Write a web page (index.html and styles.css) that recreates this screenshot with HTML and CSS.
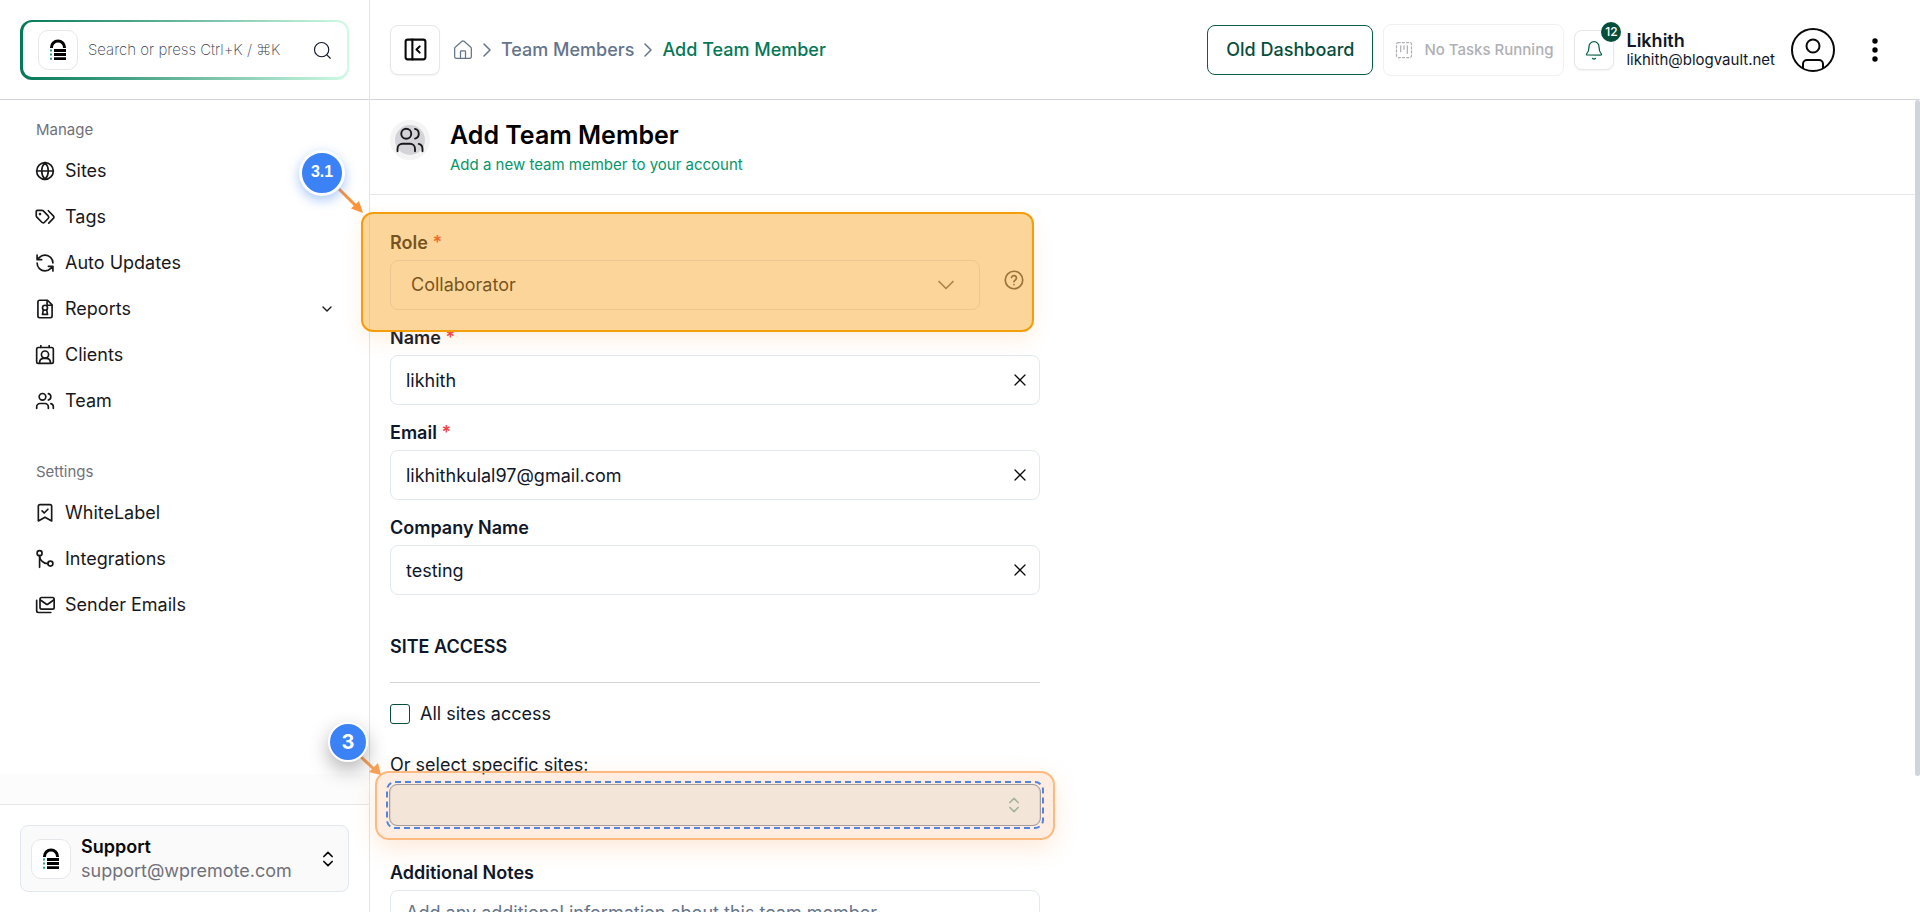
FILE: index.html
```html
<!DOCTYPE html>
<html lang="en">
<head>
  <meta charset="UTF-8">
  <title>Add Team Member</title>
  <link rel="stylesheet" href="styles.css">
</head>
<body>

  <!-- shared shapes -->
  <svg class="sprite" aria-hidden="true">
    <symbol id="logo" viewBox="0 0 24 24">
      <path d="M5.500 10V9.500a6.500 6.500 0 0 1 13 0V10" fill="none" stroke="#000" stroke-width="3"/>
      <path d="M8 12.500h12M8 16.500h12M8 20.700h12" stroke="#000" stroke-width="2.800"/>
      <path d="M4 12.500h2M4 16.500h2M4 20.700h2" stroke="#2a9d8f" stroke-width="2"/>
    </symbol>
    <symbol id="users" viewBox="0 0 24 24">
      <path d="M16 21v-2a4 4 0 0 0-4-4H6a4 4 0 0 0-4 4v2"/>
      <circle cx="9" cy="7" r="4"/>
      <path d="M22 21v-2a4 4 0 0 0-3-3.870M16 3.130a4 4 0 0 1 0 7.750"/>
    </symbol>
    <symbol id="chevron-right" viewBox="0 0 24 24"><path d="m9 18 6-6-6-6"/></symbol>
    <symbol id="chevron-down" viewBox="0 0 24 24"><path d="m6 9 6 6 6-6"/></symbol>
    <symbol id="up-down" viewBox="0 0 24 24"><path d="m7 15 5 5 5-5M7 9l5-5 5 5"/></symbol>
    <symbol id="close" viewBox="0 0 24 24"><path d="M18 6 6 18M6 6l12 12"/></symbol>
  </svg>

  <aside class="sidebar">
    <div class="sidebar-top">
      <div class="search">
        <span class="logo-tile"><svg class="logo"><use href="#logo"/></svg></span>
        <input type="text" class="search-input" aria-label="Search" placeholder="Search or press Ctrl+K / ⌘K">
        <svg class="icon search-icon" viewBox="0 0 24 24"><circle cx="11.500" cy="11.500" r="9.500"/><path d="m18.500 18.500 4.500 4.500"/></svg>
      </div>
    </div>

    <nav class="menu">
      <h2 class="menu-title">Manage</h2>
      <a href="#" class="menu-item">
        <svg class="icon" viewBox="0 0 24 24"><circle cx="12" cy="12" r="10"/><path d="M12 2a14.500 14.500 0 0 0 0 20 14.500 14.500 0 0 0 0-20M2 12h20"/></svg>
        Sites
      </a>
      <a href="#" class="menu-item">
        <svg class="icon" viewBox="0 0 24 24"><path d="M1.500 5.500v5a2.500 2.500 0 0 0 .7 1.700l6 6.100a2.200 2.200 0 0 0 3.200 0l4.400-4.500a2.200 2.200 0 0 0 0-3.100L10 4.700A2.500 2.500 0 0 0 8.300 4H3A1.500 1.500 0 0 0 1.500 5.500z"/><path d="m16 4.500 6 6.200a2.200 2.200 0 0 1 0 3l-5.500 5.600"/><circle cx="6" cy="8.500" r=".6"/></svg>
        Tags
      </a>
      <a href="#" class="menu-item">
        <svg class="icon" viewBox="0 0 24 24"><path d="M21.500 12A9.500 9.500 0 0 0 12 2.500a9.750 9.750 0 0 0-7 3L2.500 8M2.500 2.500V8H8M2.500 12a9.500 9.500 0 0 0 9.500 9.500 9.750 9.750 0 0 0 7-3l2.500-2.500M16 16h5.500v5.500"/></svg>
        Auto Updates
      </a>
      <a href="#" class="menu-item">
        <svg class="icon" viewBox="0 0 24 24"><path d="M15 1.500H5.500a2 2 0 0 0-2 2v17a2 2 0 0 0 2 2h13a2 2 0 0 0 2-2V7z"/><path d="M14.500 2v5.500h5.500"/><circle cx="12" cy="10.500" r="3"/><path d="m10 13-1 5.500h6l-1-5.500"/></svg>
        Reports
        <svg class="icon menu-arrow"><use href="#chevron-down"/></svg>
      </a>
      <a href="#" class="menu-item">
        <svg class="icon" viewBox="0 0 24 24"><rect x="2" y="3" width="20" height="19" rx="2"/><path d="M7 .8V3M17 .8V3M5.500 21.500v-1a5 5 0 0 1 5-4.500h3a5 5 0 0 1 5 4.500v1"/><circle cx="12" cy="11.500" r="4.300"/></svg>
        Clients
      </a>
      <a href="#" class="menu-item">
        <svg class="icon"><use href="#users"/></svg>
        Team
      </a>

      <h2 class="menu-title">Settings</h2>
      <a href="#" class="menu-item">
        <svg class="icon" viewBox="0 0 24 24"><path d="m20 21.500-8-4.500-8 4.500V4a2 2 0 0 1 2-2h12a2 2 0 0 1 2 2z"/><path d="m8.500 9.500 2.500 2.500 4.500-4.500"/></svg>
        WhiteLabel
      </a>
      <a href="#" class="menu-item">
        <svg class="icon" viewBox="0 0 24 24"><circle cx="5.500" cy="5" r="3"/><circle cx="18.500" cy="17.500" r="3"/><path d="M5.500 22V8a10 10 0 0 0 10 9.500"/></svg>
        Integrations
      </a>
      <a href="#" class="menu-item">
        <svg class="icon" viewBox="0 0 24 24"><rect x="6" y="3" width="17" height="14" rx="2"/><path d="m6.500 6 6.800 4.800a2 2 0 0 0 2.400 0L22.500 6M2 6.500V19a2 2 0 0 0 2 2h15"/></svg>
        Sender Emails
      </a>
    </nav>

    <div class="sidebar-shade"></div>
    <div class="sidebar-bottom">
      <button type="button" class="account">
        <span class="logo-tile"><svg class="logo"><use href="#logo"/></svg></span>
        <span class="account-text">
          <strong>Support</strong>
          <span class="account-mail">support@wpremote.com</span>
        </span>
        <svg class="icon"><use href="#up-down"/></svg>
      </button>
    </div>
  </aside>

  <div class="content">
    <header class="topbar">
      <button type="button" class="toggle" aria-label="Toggle sidebar">
        <svg class="icon" viewBox="0 0 24 24"><rect x="2.500" y="2.500" width="19" height="19" rx="2"/><path d="M9 2.500v19M16 9l-3 3 3 3"/></svg>
      </button>
      <nav class="breadcrumb">
        <a href="#" aria-label="Home"><svg class="icon home" viewBox="0 0 24 24"><path d="M15 22v-8a1 1 0 0 0-1-1h-4a1 1 0 0 0-1 1v8"/><path d="M2 10.200a2 2 0 0 1 .7-1.500l8-7.100a2 2 0 0 1 2.600 0l8 7.100a2 2 0 0 1 .7 1.500V20a2 2 0 0 1-2 2H4a2 2 0 0 1-2-2z"/></svg></a>
        <svg class="icon sep"><use href="#chevron-right"/></svg>
        <a href="#">Team Members</a>
        <svg class="icon sep"><use href="#chevron-right"/></svg>
        <a href="#" class="current">Add Team Member</a>
      </nav>

      <div class="actions">
        <button type="button" class="old-dashboard">Old Dashboard</button>
        <button type="button" class="tasks" disabled>
          <svg class="icon" viewBox="0 0 24 24"><rect x="3" y="3" width="18" height="18" rx="2" stroke-dasharray="2.500 2.500"/><path d="M8 7v7M12 7v4M16 7v9"/></svg>
          No Tasks Running
        </button>
        <button type="button" class="bell" aria-label="Notifications">
          <svg class="icon" viewBox="0 0 24 24"><path d="M10.300 22a2 2 0 0 0 3.400 0M3.300 16.300A1 1 0 0 0 4 18h16a1 1 0 0 0 .7-1.700C19.400 15 18 13.500 18 8A6 6 0 0 0 6 8c0 5.500-1.400 7-2.700 8.300"/></svg>
          <span class="badge">12</span>
        </button>
        <div class="user">
          <strong>Likhith</strong>
          <span>likhith@blogvault.net</span>
        </div>
        <svg class="avatar" viewBox="0 0 44 44"><circle cx="22" cy="22" r="21"/><circle cx="22" cy="18" r="6.500"/><path d="M12 40v-4a4 4 0 0 1 4-4h12a4 4 0 0 1 4 4v4"/></svg>
        <button type="button" class="more" aria-label="More">
          <svg viewBox="0 0 6 24"><circle cx="3" cy="3" r="2.700"/><circle cx="3" cy="12" r="2.700"/><circle cx="3" cy="21" r="2.700"/></svg>
        </button>
      </div>
    </header>

    <main class="page">
      <div class="page-head">
        <span class="page-icon"><svg class="icon"><use href="#users"/></svg></span>
        <div>
          <h1>Add Team Member</h1>
          <p>Add a new team member to your account</p>
        </div>
      </div>

      <form class="form">
        <div class="field">
          <label for="role">Role <span class="required">*</span></label>
          <div class="role-row">
            <div class="control">
              <select id="role"><option>Collaborator</option></select>
              <svg class="icon role-arrow"><use href="#chevron-down"/></svg>
            </div>
            <svg class="icon help" viewBox="0 0 24 24"><circle cx="12" cy="12" r="10.500"/><path d="M9 9a3 3 0 0 1 5.900 1c0 2-3 2.500-3 4.200M12 17.500v.2"/></svg>
          </div>
          <div class="mark mark-role"></div>
          <svg class="pointer pointer-role" viewBox="0 0 32 32"><path class="line" d="M4 4l18 18"/><path class="tip" d="M28 28 16 23.500 24 16z"/></svg>
          <span class="step step-role">3.1</span>
        </div>

        <div class="field">
          <label for="name">Name <span class="required">*</span></label>
          <div class="control">
            <input type="text" id="name" value="likhith">
            <button type="button" class="clear" aria-label="Clear name"><svg class="icon"><use href="#close"/></svg></button>
          </div>
        </div>

        <div class="field">
          <label for="email">Email <span class="required">*</span></label>
          <div class="control">
            <input type="email" id="email" value="likhithkulal97@gmail.com">
            <button type="button" class="clear" aria-label="Clear email"><svg class="icon"><use href="#close"/></svg></button>
          </div>
        </div>

        <div class="field">
          <label for="company">Company Name</label>
          <div class="control">
            <input type="text" id="company" value="testing">
            <button type="button" class="clear" aria-label="Clear company name"><svg class="icon"><use href="#close"/></svg></button>
          </div>
        </div>

        <h2 class="section-title">SITE ACCESS</h2>

        <div class="check">
          <input type="checkbox" id="all-sites">
          <label for="all-sites">All sites access</label>
        </div>

        <div class="sites">
          <label for="sites">Or select specific sites:</label>
          <div class="control">
            <select id="sites"><option></option></select>
            <svg class="icon sites-arrow"><use href="#up-down"/></svg>
            <div class="mark mark-sites"></div>
            <div class="outline-sites"><svg><rect width="100%" height="100%" rx="8"/></svg></div>
            <svg class="pointer pointer-sites" viewBox="0 0 32 32"><path class="line" d="M8 9l14 13"/><path class="tip" d="M28 27 16 24 25 15z"/></svg>
            <span class="step step-sites">3</span>
          </div>
        </div>

        <div class="field notes">
          <label for="notes">Additional Notes</label>
          <textarea id="notes" rows="3" placeholder="Add any additional information about this team member"></textarea>
        </div>
      </form>
    </main>
    <div class="scrollbar"></div>
  </div>

</body>
</html>
```
FILE: styles.css
```css
* {
  box-sizing: border-box;
}
body {
  font-family: Inter, sans-serif;
  font-size: 18px;
  line-height: 24px;
  color: #0f172a;
  margin: 0;
  display: flex;
  height: 100vh;
  overflow: hidden;
  background: #fff;
}
h1, h2, p {
  margin: 0;
}
a {
  color: inherit;
  text-decoration: none;
}
button, input, select, textarea {
  font: inherit;
  color: inherit;
  background: #fff;
}
button {
  padding: 0;
  cursor: pointer;
}
strong {
  font-weight: 600;
}
.sprite {
  position: absolute;
  width: 0;
  height: 0;
}
.icon {
  width: 20px;
  height: 20px;
  flex: none;
  fill: none;
  stroke: currentColor;
  stroke-width: 2;
  stroke-linecap: round;
  stroke-linejoin: round;
}

/* sidebar */
.sidebar {
  width: 370px;
  flex: none;
  display: flex;
  flex-direction: column;
  border-right: 1px solid #e2e4ea;
}
.sidebar-top {
  height: 100px;
  padding: 20px;
  border-bottom: 1px solid #d1d5db;
}
.search {
  height: 60px;
  display: flex;
  align-items: center;
  padding: 0 16px 0 15px;
  border: solid transparent;
  border-width: 2px 2px 3px 3px;
  border-radius: 12px;
  background: linear-gradient(#fff, #fff) padding-box, linear-gradient(90deg, #047857, #d1fae5) border-box;
}
.logo-tile {
  width: 40px;
  height: 40px;
  flex: none;
  display: flex;
  align-items: center;
  justify-content: center;
  border: 1px solid #e5e7eb;
  border-radius: 10px;
  background: #fff;
}
.logo {
  width: 24px;
  height: 24px;
}
.search-input {
  flex: 1;
  min-width: 0;
  margin-left: 10px;
  padding: 0;
  border: 0;
  outline: 0;
  font-size: 15px;
  font-weight: 200;
}
.search-input::placeholder {
  color: #374151;
  opacity: 1;
}
.search-icon {
  width: 18px;
  height: 18px;
  stroke-width: 1.5;
}
.menu {
  flex: 1;
  display: flex;
  flex-direction: column;
  padding: 11px 20px;
  color: #18181b;
}
.menu-title {
  height: 37px;
  padding: 0 16px;
  font-size: 15px;
  line-height: 38px;
  font-weight: 400;
  color: #71717a;
}
.menu-item + .menu-title {
  margin-top: 29px;
}
.menu-item {
  height: 46px;
  display: flex;
  align-items: center;
  gap: 10px;
  padding: 0 14px 0 15px;
}
.menu-arrow {
  width: 16px;
  height: 16px;
  margin-left: auto;
}
.sidebar-shade {
  height: 30px;
  background: #fcfcfc;
}
.sidebar-bottom {
  padding: 20px;
  border-top: 1px solid #e5e7eb;
}
.account {
  width: 100%;
  height: 67px;
  display: flex;
  align-items: center;
  gap: 10px;
  padding: 0 10px;
  border: 1px solid #e2e8f0;
  border-radius: 8px;
  background: #fafafa;
  color: #09090b;
  text-align: left;
}
.account-text {
  flex: 1;
  display: flex;
  flex-direction: column;
}
.account-mail {
  color: #71717a;
}

/* top bar */
.content {
  flex: 1;
  min-width: 0;
  display: flex;
  flex-direction: column;
  position: relative;
}
.topbar {
  height: 100px;
  flex: none;
  display: flex;
  align-items: center;
  padding: 0 36px 0 20px;
  border-bottom: 1px solid #d1d5db;
}
.toggle {
  width: 50px;
  height: 50px;
  display: flex;
  align-items: center;
  justify-content: center;
  border: 1px solid #e5e7eb;
  border-radius: 8px;
  box-shadow: 0 1px 2px rgba(0, 0, 0, .05);
  color: #09090b;
}
.toggle .icon {
  width: 25px;
  height: 25px;
}
.breadcrumb {
  display: flex;
  align-items: center;
  gap: 2px;
  margin-left: 13px;
  font-weight: 500;
  color: #64748b;
}
.breadcrumb .icon {
  display: block;
  stroke-width: 1.5;
}
.breadcrumb .sep {
  width: 24px;
  height: 24px;
}
.current {
  color: #047857;
}
.actions {
  display: flex;
  align-items: center;
  margin-left: auto;
}
.old-dashboard {
  height: 50px;
  padding: 0 18px;
  border: 1px solid #065f46;
  border-radius: 8px;
  font-weight: 500;
  color: #064e3b;
}
.tasks {
  height: 52px;
  display: flex;
  align-items: center;
  gap: 10px;
  margin: 0 10px;
  padding: 0 10px;
  border: 1px solid #f1f1f3;
  border-radius: 8px;
  font-size: 15px;
  font-weight: 500;
  color: #b0b0b5;
}
.tasks .icon {
  stroke-width: 1.5;
}
.bell {
  width: 40px;
  height: 40px;
  position: relative;
  display: flex;
  align-items: center;
  justify-content: center;
  border: 1px solid #e5e7eb;
  border-radius: 8px;
  box-shadow: 0 1px 2px rgba(0, 0, 0, .05);
  color: #065f46;
}
.bell .icon {
  stroke-width: 1.5;
}
.badge {
  position: absolute;
  top: -9px;
  right: -8px;
  width: 20px;
  height: 20px;
  border-radius: 50%;
  background: #064e3b;
  color: #fff;
  font-size: 12px;
  line-height: 20px;
  font-weight: 500;
  text-align: center;
}
.user {
  display: flex;
  flex-direction: column;
  margin: 0 16px 0 12px;
  font-size: 15px;
  line-height: 19px;
}
.user strong {
  font-size: 18px;
}
.avatar {
  width: 44px;
  height: 44px;
  fill: none;
  stroke: #09090b;
  stroke-width: 2;
}
.more {
  width: 18px;
  height: 40px;
  margin-left: 31px;
  border: 0;
}
.more svg {
  display: block;
  width: 6px;
  height: 24px;
  margin: auto;
}

/* page */
.page {
  flex: 1;
  min-height: 0;
}
.page-head {
  height: 95px;
  display: flex;
  gap: 20px;
  padding: 20px;
  border-bottom: 1px solid #e5e7eb;
}
.page-icon {
  width: 40px;
  height: 40px;
  display: flex;
  align-items: center;
  justify-content: center;
  border: 5px solid #f4f4f5;
  border-radius: 50%;
  background: #d4d4d8;
  color: #18181b;
}
.page-icon .icon {
  width: 30px;
  height: 30px;
  stroke-width: 1.5;
}
h1 {
  font-size: 25px;
  line-height: 30px;
  font-weight: 600;
  color: #000;
}
.page-head p {
  font-size: 15px;
  line-height: 30px;
  color: #059669;
}
.form {
  max-width: 690px;
  padding: 33px 20px;
}
.field {
  position: relative;
  margin-bottom: 13px;
}
.field label {
  display: block;
  height: 32px;
  line-height: 30px;
  font-weight: 600;
}
.required {
  color: #ef4444;
}
.control {
  position: relative;
  flex: 1;
}
.control input, .control select, textarea {
  display: block;
  width: 100%;
  height: 50px;
  padding: 0 48px 0 15px;
  border: 1px solid #e2e8f0;
  border-radius: 8px;
  appearance: none;
}
.control select {
  padding-left: 20px;
}
.clear {
  position: absolute;
  top: 15px;
  right: 10px;
  width: 20px;
  height: 20px;
  border: 0;
  color: #09090b;
}
.clear .icon {
  display: block;
  stroke-width: 1.5;
}
.role-row {
  display: flex;
  align-items: flex-start;
  gap: 24px;
}
.role-arrow {
  position: absolute;
  top: 11px;
  right: 20px;
  width: 28px;
  height: 28px;
  stroke-width: 1.5;
  color: #71717a;
}
.help {
  margin: 10px 16px 0 0;
  color: #52525b;
}
.section-title {
  height: 75px;
  margin: 11px 0 20px;
  padding-top: 13px;
  border-bottom: 1px solid #d1d5db;
  font-size: 18px;
  line-height: 52px;
  font-weight: 600;
}
.check {
  display: flex;
  align-items: center;
  gap: 10px;
  height: 22px;
}
.check input {
  width: 20px;
  height: 20px;
  margin: 0;
  appearance: none;
  border: 1px solid #064e3b;
  border-radius: 3px;
}
.sites {
  margin-top: 27px;
}
.sites label {
  display: block;
  height: 32px;
  line-height: 26px;
}
.sites .control select {
  height: 42px;
}
.sites-arrow {
  position: absolute;
  top: 11px;
  right: 16px;
  color: #065f46;
  opacity: .4;
}
.notes {
  margin-top: 32px;
}
.notes textarea {
  height: 100px;
  padding: 10px 15px;
}
textarea::placeholder {
  color: #64748b;
}

/* guide overlays */
.mark {
  position: absolute;
  z-index: 2;
  border: 2px solid #f59e0b;
  border-radius: 12px;
  pointer-events: none;
}
.mark-role {
  top: -16px;
  left: -29px;
  right: 6px;
  height: 120px;
  background: rgba(247, 159, 23, .44);
  box-shadow: 0 8px 20px rgba(251, 146, 60, .14);
}
.mark-sites {
  inset: -13px -15px -14px;
  border-color: #fdba80;
  border-radius: 14px;
  background: rgba(251, 146, 60, .16);
  box-shadow: 0 8px 24px rgba(251, 146, 60, .2);
}
.outline-sites {
  position: absolute;
  z-index: 3;
  inset: -2px -3px;
  pointer-events: none;
}
.outline-sites svg {
  display: block;
  width: 100%;
  height: 100%;
  overflow: visible;
  fill: none;
  stroke: #5584e0;
  stroke-width: 2;
  stroke-dasharray: 6 4;
}
.outline-sites::before {
  content: "";
  position: absolute;
  inset: 2px;
  border: 1px solid #a39c9c;
  border-radius: 8px;
  background: rgba(110, 150, 140, .08);
}
.step {
  position: absolute;
  z-index: 4;
  border: 3px solid #fff;
  border-radius: 50%;
  background: #3b82f6;
  color: #fff;
  font-weight: 700;
  text-align: center;
}
.step-role {
  top: -78px;
  left: -91px;
  width: 46px;
  height: 46px;
  font-family: "Liberation Sans", Arial, sans-serif;
  font-size: 16px;
  line-height: 38px;
  box-shadow: 0 4px 12px rgba(59, 130, 246, .45);
}
.step-sites {
  top: -62px;
  left: -62px;
  width: 40px;
  height: 40px;
  border-width: 2px;
  font-size: 20px;
  line-height: 36px;
  box-shadow: 0 8px 20px rgba(0, 0, 0, .3);
}
.pointer {
  position: absolute;
  z-index: 3;
  width: 32px;
  height: 32px;
}
.pointer .line {
  stroke: #fb923c;
  stroke-width: 3;
}
.pointer .tip {
  fill: #fb923c;
}
.pointer-role {
  top: -43px;
  left: -55px;
}
.pointer-sites {
  top: -36px;
  left: -37px;
  opacity: .85;
}

.scrollbar {
  position: absolute;
  top: 100px;
  right: 0;
  width: 5px;
  height: 676px;
  border-radius: 3px;
  background: #d1d5db;
}
```
